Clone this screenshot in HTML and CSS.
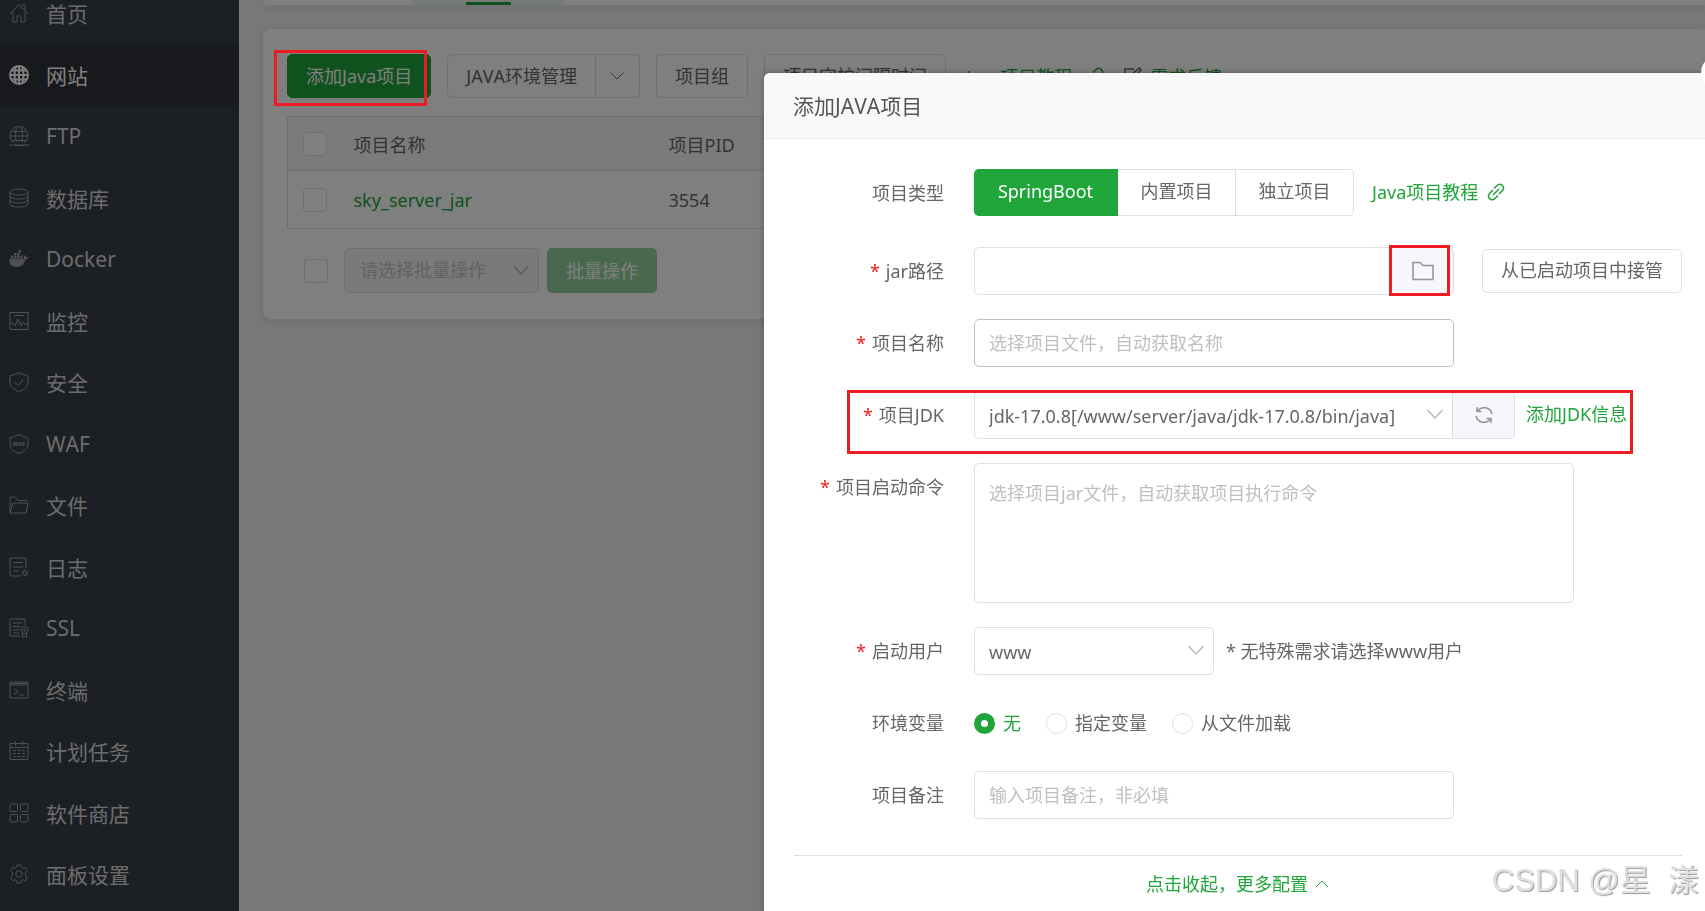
FILE: index.html
```html
<!DOCTYPE html>
<html lang="zh-CN">
<head>
  <meta charset="UTF-8">
  <meta name="viewport" content="width=device-width, initial-scale=1.0">
  <title>添加JAVA项目</title>
  <link rel="stylesheet" href="styles.css">
</head>
<body>
  <div class="layout">
    <nav class="sidebar">
      <a href="#" class="menu-item">
        <svg class="icon" viewBox="0 0 20 20"><path d="M1 11 10 1.500l9 9.500M4 9v10h4v-6h4v6h4V9M13 2h3v5"/></svg>首页</a>
      <a href="#" class="menu-item active">
        <svg class="icon" viewBox="0 0 20 20"><circle cx="10" cy="10" r="9"/><path d="M1 10h18M2.500 5.500h15M2.500 14.500h15M10 1v18M7 1.500C5 6 5 14 7 18.500M13 1.500c2 4.500 2 12.500 0 17"/></svg>网站</a>
      <a href="#" class="menu-item">
        <svg class="icon" viewBox="0 0 20 20"><path d="M5 17A9 9 0 1 1 15 17M1 10h18M3 5.500h14M3 14.500h14M7.500 1.500C6 6 6 12 7.500 16M12.500 1.500C14 6 14 12 12.500 16M0 19h20M6 19.500h8"/></svg>FTP</a>
      <a href="#" class="menu-item">
        <svg class="icon" viewBox="0 0 20 20"><ellipse cx="10" cy="4" rx="9" ry="3"/><path d="M1 4v12c0 4 18 4 18 0V4M1 8c0 4 18 4 18 0M1 12c0 4 18 4 18 0"/></svg>数据库</a>
      <a href="#" class="menu-item">
        <svg class="icon solid" viewBox="0 0 20 20"><path d="M.5 9.500h14.200c.6-.6.500-2.300-.2-3.500 1.500.3 2.200 1 2.500 2 1.200-.1 2 0 2.600.6-.6 1.200-1.800 1.600-3 1.600C15 15.500 12 18 7.500 18 2.500 18 0 15 .5 9.500zM2 6.500h2.400V9H2zM5 6.500h2.400V9H5zM8 6.500h2.400V9H8zM11 6.500h2.400V9H11zM5 4h2.400v2H5zM8 4h2.400v2H8zM9.500 1h2.400v2.500H9.500z"/></svg>Docker</a>
      <a href="#" class="menu-item">
        <svg class="icon" viewBox="0 0 20 20"><path d="M1 1.500h18v17H1zM5 4.500h10M1 13l3-1 2 3 3-7 3 7 2-4 2 2h3"/></svg>监控</a>
      <a href="#" class="menu-item">
        <svg class="icon" viewBox="0 0 20 20"><path d="M10 .800 1 4v6c0 4.500 4 8 9 9.500 5-1.500 9-5 9-9.500V4zM5.500 10l3.500 3.500L14.500 7"/></svg>安全</a>
      <a href="#" class="menu-item">
        <svg class="icon" viewBox="0 0 20 20"><path d="M10 .800 1 4v6c0 4.500 4 8 9 9.500 5-1.500 9-5 9-9.500V4z"/><text class="icon-text" x="10" y="12" text-anchor="middle">WAF</text></svg>WAF</a>
      <a href="#" class="menu-item">
        <svg class="icon" viewBox="0 0 20 20"><path d="M1 18V2h5l3 3.500h9M1 18h16l2-10H4L1 18"/></svg>文件</a>
      <a href="#" class="menu-item">
        <svg class="icon" viewBox="0 0 20 20"><path d="M12 19H1V1h16v10M4 5.500h10M4 10h10M4 14h6"/><circle cx="16" cy="16" r="2"/><path d="M16 12.500v1.500M16 18v1.500M12.500 16H14M18 16h1.500M13.500 13.500l1 1M17.500 17.500l1 1M18.500 13.500l-1 1M14.500 17.500l-1 1"/></svg>日志</a>
      <a href="#" class="menu-item">
        <svg class="icon" viewBox="0 0 20 20"><path d="M11 18H1V1h15v6M4 5h9M4 8.500h7M4 12h6M4 15h6"/><circle cx="15.500" cy="12" r="3.500"/><circle cx="15.500" cy="12" r="1"/><path d="M13.500 15v4.500l2-1.500 2 1.500V15"/></svg>SSL</a>
      <a href="#" class="menu-item">
        <svg class="icon" viewBox="0 0 20 20"><path d="M1 2h18v16H1zM1 3.500h18M1 5h18M5 8.500l4 3-4 3M10 15h5"/></svg>终端</a>
      <a href="#" class="menu-item">
        <svg class="icon" viewBox="0 0 20 20"><path d="M1 2.500h18v16H1zM1 6.500h18M6.500 0v4.500M13.500 0v4.500M4 9.500h3M8.500 9.500h3M13 9.500h3M4 12.500h3M8.500 12.500h3M13 12.500h3M4 15.500h3M8.500 15.500h3M13 15.500h3"/></svg>计划任务</a>
      <a href="#" class="menu-item">
        <svg class="icon" viewBox="0 0 20 20"><rect x="1" y="1" width="7.500" height="7.500" rx="1"/><rect x="11.500" y="1" width="7.500" height="7.500" rx="1"/><rect x="1" y="11.500" width="7.500" height="7.500" rx="1"/><rect x="11.500" y="11.500" width="7.500" height="7.500" rx="1"/></svg>软件商店</a>
      <a href="#" class="menu-item">
        <svg class="icon" viewBox="0 0 20 20"><path d="M8 1h4l.5 2.500 1.500.8 2.300-1 2 3.200-1.800 1.800v3.400l1.800 1.800-2 3.200-2.300-1-1.500.8L12 19H8l-.5-2.500-1.500-.8-2.300 1-2-3.200 1.800-1.800V8.300L1.700 6.500l2-3.200 2.300 1 1.500-.8z"/><circle cx="10" cy="10" r="3.300"/></svg>面板设置</a>
    </nav>

    <main class="content">
      <div class="tabs-card">
        <div class="tab"></div>
      </div>

      <div class="card">
        <div class="toolbar">
          <button type="button" class="btn btn-primary">添加Java项目</button>
          <div class="btn-group">
            <button type="button" class="btn">JAVA环境管理</button>
            <button type="button" class="btn btn-arrow" aria-label="展开">
              <svg class="chevron" viewBox="0 0 16 16"><path d="M1.500 4.500 8 11l6.500-6.500"/></svg>
            </button>
          </div>
          <button type="button" class="btn">项目组</button>
          <button type="button" class="btn">项目守护间隔时间</button>
          <a href="#" class="link tool-link">Java项目教程
            <svg class="tool-icon" viewBox="0 0 18 18"><path d="M7 5.500 10 2.500a3.500 3.500 0 0 1 5.500 0 3.500 3.500 0 0 1 0 5L12 11M11 12.500l-3 3a3.500 3.500 0 0 1-5.500 0 3.500 3.500 0 0 1 0-5L6 7M6 12l6-6"/></svg>
          </a>
          <a href="#" class="link feedback">
            <svg class="tool-icon grey" viewBox="0 0 18 18"><path d="M10 2H1v15h14V9M6 12l1-4 8.500-7L17 3l-7.500 8z"/></svg>需求反馈</a>
        </div>

        <table class="project-table">
          <thead>
            <tr>
              <th class="col-check"><input type="checkbox" class="check" aria-label="全选"></th>
              <th class="col-name">项目名称</th>
              <th>项目PID</th>
            </tr>
          </thead>
          <tbody>
            <tr>
              <td class="col-check"><input type="checkbox" class="check" aria-label="sky_server_jar"></td>
              <td class="col-name"><a href="#" class="link">sky_server_jar</a></td>
              <td>3554</td>
            </tr>
          </tbody>
        </table>

        <div class="batch">
          <input type="checkbox" class="check" aria-label="批量选择">
          <div class="select-wrap batch-select">
            <select class="control" aria-label="批量操作" disabled>
              <option>请选择批量操作</option>
            </select>
            <svg class="chevron" viewBox="0 0 16 16"><path d="M.5 4 8 12l7.500-8"/></svg>
          </div>
          <button type="button" class="btn btn-primary btn-disabled" disabled>批量操作</button>
        </div>
      </div>
    </main>
  </div>

  <div class="mask"></div>

  <section class="dialog" role="dialog" aria-labelledby="dialogTitle">
    <button type="button" class="close" aria-label="关闭"></button>
    <header class="dialog-header">
      <h2 id="dialogTitle">添加JAVA项目</h2>
    </header>

    <form class="dialog-body">
      <div class="form-row row-type">
        <span class="label">项目类型</span>
        <div class="segmented">
          <button type="button" class="seg selected">SpringBoot</button>
          <button type="button" class="seg">内置项目</button>
          <button type="button" class="seg">独立项目</button>
        </div>
        <a href="#" class="link type-link">Java项目教程
          <svg class="tool-icon" viewBox="0 0 18 18"><path d="M7 5.500 10 2.500a3.500 3.500 0 0 1 5.500 0 3.500 3.500 0 0 1 0 5L12 11M11 12.500l-3 3a3.500 3.500 0 0 1-5.500 0 3.500 3.500 0 0 1 0-5L6 7M6 12l6-6"/></svg>
        </a>
      </div>

      <div class="form-row">
        <label class="label required" for="jarPath">jar路径</label>
        <div class="input-group">
          <input type="text" class="control" id="jarPath">
          <button type="button" class="append" aria-label="选择文件">
            <svg class="folder" viewBox="0 0 22 20"><path d="M1 1.500h7l3 3h10v14H1z"/></svg>
          </button>
        </div>
        <button type="button" class="btn takeover">从已启动项目中接管</button>
      </div>

      <div class="form-row">
        <label class="label required" for="projectName">项目名称</label>
        <input type="text" class="control width-lg hovered" id="projectName" placeholder="选择项目文件，自动获取名称">
      </div>

      <div class="form-row">
        <label class="label required" for="jdk">项目JDK</label>
        <div class="input-group jdk-group">
          <div class="select-wrap width-lg">
            <select class="control" id="jdk">
              <option>jdk-17.0.8[/www/server/java/jdk-17.0.8/bin/java]</option>
            </select>
            <svg class="chevron" viewBox="0 0 16 16"><path d="M.5 4 8 12l7.500-8"/></svg>
          </div>
          <button type="button" class="append" aria-label="刷新">
            <svg class="refresh" viewBox="0 0 18 18"><path d="M2 1v4.500h4.500M2.500 5.300A8 8 0 0 1 17 8M16 17v-4.500h-4.500M15.500 12.700A8 8 0 0 1 1 10"/></svg>
          </button>
        </div>
        <a href="#" class="link jdk-link">添加JDK信息</a>
      </div>

      <div class="form-row">
        <label class="label required" for="command">项目启动命令</label>
        <textarea class="control command" id="command" placeholder="选择项目jar文件，自动获取项目执行命令"></textarea>
      </div>

      <div class="form-row">
        <label class="label required" for="user">启动用户</label>
        <div class="select-wrap width-sm">
          <select class="control" id="user">
            <option>www</option>
          </select>
          <svg class="chevron" viewBox="0 0 16 16"><path d="M.5 4 8 12l7.500-8"/></svg>
        </div>
        <span class="hint">* 无特殊需求请选择www用户</span>
      </div>

      <div class="form-row">
        <span class="label">环境变量</span>
        <div class="radios">
          <label class="radio"><input type="radio" name="env" checked><span>无</span></label>
          <label class="radio"><input type="radio" name="env"><span>指定变量</span></label>
          <label class="radio"><input type="radio" name="env"><span>从文件加载</span></label>
        </div>
      </div>

      <div class="form-row">
        <label class="label" for="remark">项目备注</label>
        <input type="text" class="control width-lg" id="remark" placeholder="输入项目备注，非必填">
      </div>

      <div class="more">
        <a href="#" class="link">点击收起，更多配置
          <svg class="chevron" viewBox="0 0 16 16"><path d="M2 11l6-6 6 6"/></svg>
        </a>
      </div>
    </form>

    <div class="mark mark-folder"></div>
    <div class="mark mark-jdk"></div>
  </section>

  <div class="mark mark-add"></div>
  <div class="watermark">CSDN @星&nbsp; 漾</div>
</body>
</html>
```
FILE: styles.css
```css
* {
  box-sizing: border-box;
}
body {
  margin: 0;
  height: 100vh;
  overflow: hidden;
  font-family: "Noto Sans", "Noto Sans CJK SC", sans-serif;
  font-size: 18px;
  font-kerning: none;
  color: #666;
  background-color: #f0f0f0;
}
button,
input,
select,
textarea {
  font: inherit;
  font-kerning: none;
  color: inherit;
}
a {
  text-decoration: none;
}
svg {
  fill: none;
  stroke: currentColor;
  flex: none;
}
.link {
  color: #20a53a;
}
.layout {
  display: flex;
  height: 100vh;
}

/* sidebar, scrolled down a little */
.sidebar {
  flex: none;
  width: 239px;
  margin-top: -17px;
  padding-bottom: 7px;
  display: flex;
  flex-direction: column;
  justify-content: space-between;
  background-color: #393f47;
}
.menu-item {
  display: flex;
  align-items: center;
  gap: 17px;
  height: 60px;
  padding-left: 9px;
  font-size: 21px;
  color: #d8d8d8;
}
.menu-item.active {
  background-color: #303238;
  color: #fff;
}
.icon {
  width: 20px;
  height: 20px;
  color: #a0a0a0;
}
.active .icon {
  color: #fff;
  stroke-width: 2;
}
.icon.solid {
  fill: currentColor;
  stroke: none;
}
.icon-text {
  font-size: 6px;
  font-weight: bold;
  fill: currentColor;
  stroke: none;
}

/* project list */
.content {
  flex: 1;
  min-width: 0;
  padding-left: 24px;
}
.tabs-card {
  height: 5px;
  margin-bottom: 24px;
  padding-left: 150px;
  border-radius: 0 0 0 8px;
  background-color: #fff;
  box-shadow: 0 2px 8px rgba(0, 0, 0, 0.1);
}
.tab {
  display: flex;
  justify-content: center;
  width: 150px;
  height: 5px;
  background-color: #e9f6eb;
}
.tab::after {
  content: "";
  width: 45px;
  height: 3px;
  margin-top: 2px;
  background-color: #20a53a;
}
.card {
  padding: 25px 0 26px 24px;
  border-radius: 8px 0 0 8px;
  background-color: #fff;
  box-shadow: 0 2px 8px rgba(0, 0, 0, 0.1);
}
.toolbar {
  display: flex;
  align-items: center;
  gap: 16px;
  white-space: nowrap;
}
.btn {
  height: 44px;
  padding: 0 18px 2px;
  border: 1px solid #dcdfe6;
  border-radius: 5px;
  background-color: #fff;
  white-space: nowrap;
}
.btn-primary {
  border-color: #20a53a;
  background-color: #20a53a;
  color: #fff;
}
.btn-disabled {
  border-color: #90d29d;
  background-color: #90d29d;
}
.btn-group {
  display: flex;
}
.btn-group .btn:first-child {
  border-radius: 5px 0 0 5px;
}
.btn-group .btn-arrow {
  display: flex;
  align-items: center;
  width: 44px;
  padding: 0 13px;
  border-left: none;
  border-radius: 0 5px 5px 0;
}
.chevron {
  width: 16px;
  height: 16px;
}
.tool-link {
  display: flex;
  align-items: center;
  gap: 14px;
  padding-left: 4px;
}
.feedback {
  display: flex;
  align-items: center;
  gap: 8px;
  padding-left: 4px;
}
.tool-icon {
  width: 18px;
  height: 18px;
  stroke-width: 1.500;
}
.tool-icon.grey {
  color: #666;
}
.project-table {
  width: 100%;
  margin: 18px 0 19px;
  border: 1px solid #dcdfe6;
  border-collapse: collapse;
}
.project-table th,
.project-table td {
  height: 58px;
  padding: 0 15px;
  border-bottom: 1px solid #dcdfe6;
  font-weight: normal;
  text-align: left;
}
.project-table th {
  height: 54px;
  background-color: #f6f6f6;
}
.project-table .col-check {
  width: 51px;
  padding-right: 0;
}
.project-table .col-name {
  width: 315px;
}
.check {
  appearance: none;
  display: block;
  width: 24px;
  height: 24px;
  margin: 0;
  border: 1px solid #dcdfe6;
  border-radius: 3px;
  background-color: #fff;
}
.batch {
  display: flex;
  align-items: center;
  gap: 8px;
  padding-left: 17px;
}
.batch .btn {
  height: 45px;
}
.batch-select {
  width: 195px;
  margin-left: 8px;
}
.batch-select .control {
  height: 45px;
  padding-left: 15px;
  background-color: #f5f5f5;
  color: #c0c4cc;
  opacity: 1;
}

/* form controls */
.control {
  display: block;
  width: 100%;
  height: 48px;
  padding: 0 14px;
  border: 1px solid #dcdfe6;
  border-radius: 5px;
  background-color: #fff;
  outline: none;
}
.control::placeholder {
  color: #bfbfbf;
}
.control.hovered {
  border-color: #c0c0c0;
}
select.control {
  appearance: none;
  padding-bottom: 2px;
}
.select-wrap {
  position: relative;
}
.select-wrap .chevron {
  position: absolute;
  top: 50%;
  right: 10px;
  margin-top: -9px;
  color: #b4b8c0;
  stroke-width: 1.500;
  pointer-events: none;
}
.width-lg {
  width: 480px;
}
.width-sm {
  width: 240px;
}

.mask {
  position: fixed;
  inset: 0;
  background-color: rgba(0, 0, 0, 0.5);
}

/* dialog, runs slightly past the right side of the window */
.dialog {
  position: fixed;
  top: 73px;
  right: -6px;
  bottom: 0;
  left: 764px;
  border-radius: 6px 6px 0 0;
  background-color: #fff;
  box-shadow: 0 0 6px rgba(0, 0, 0, 0.3);
}
.dialog-header {
  height: 66px;
  padding-left: 29px;
  border-bottom: 1px solid #eee;
  border-radius: 6px 6px 0 0;
  background-color: #f8f8f8;
}
.dialog-header h2 {
  margin: 0;
  font-size: 21px;
  font-weight: normal;
  line-height: 66px;
  color: #555;
}
.close {
  position: absolute;
  top: -18px;
  right: -26px;
  width: 36px;
  height: 36px;
  padding: 0;
  border: none;
  border-radius: 50%;
  background-color: #fff;
}
.dialog-body {
  padding: 30px 29px 0 30px;
}
.form-row {
  display: flex;
  min-height: 48px;
  margin-bottom: 24px;
  line-height: 48px;
  white-space: nowrap;
}
.row-type {
  margin-bottom: 30px;
}
.label {
  flex: none;
  width: 150px;
  margin-right: 30px;
  text-align: right;
}
.required::before {
  content: "*";
  margin-right: 6px;
  color: #f02020;
}
.segmented {
  display: flex;
  height: 47px;
}
.seg {
  width: 118px;
  padding: 0 0 3px;
  border: 1px solid #dcdfe6;
  border-left: none;
  background-color: #fff;
  line-height: 42px;
}
.seg.selected {
  width: 144px;
  border-color: #20a53a;
  border-radius: 5px 0 0 5px;
  background-color: #20a53a;
  color: #fff;
}
.seg:last-child {
  border-radius: 0 5px 5px 0;
}
.type-link {
  display: flex;
  align-items: center;
  gap: 9px;
  height: 46px;
  margin-left: 18px;
}
.input-group {
  display: flex;
  width: 480px;
}
.input-group .control {
  border-radius: 5px 0 0 5px;
}
.jdk-group {
  width: 541px;
}
.append {
  flex: none;
  display: flex;
  align-items: center;
  justify-content: center;
  width: 62px;
  height: 48px;
  padding: 0;
  border: 1px solid #dcdfe6;
  border-left: none;
  border-radius: 0 5px 5px 0;
  background-color: #f5f7fa;
  color: #909399;
}
.folder {
  width: 22px;
  height: 20px;
  stroke-width: 1.500;
}
.refresh {
  width: 18px;
  height: 18px;
  stroke-width: 1.500;
}
.takeover {
  margin: 2px 0 0 28px;
  line-height: 40px;
}
.jdk-link {
  margin-left: 11px;
  line-height: 46px;
}
.command {
  width: 600px;
  height: 140px;
  padding: 14px;
  line-height: 30px;
  resize: none;
}
.hint {
  margin-left: 12px;
}
.radios {
  display: flex;
  gap: 25px;
}
.radio {
  display: flex;
  align-items: center;
  gap: 8px;
}
.radio input {
  appearance: none;
  width: 21px;
  height: 21px;
  margin: 0;
  border: 1px solid #dcdfe6;
  border-radius: 50%;
  background-color: #fff;
}
.radio input:checked {
  border: 7px solid #20a53a;
}
.radio input:checked + span {
  color: #20a53a;
}
.more {
  margin-top: 36px;
  border-top: 1px solid #dcdfe6;
  line-height: 56px;
  text-align: center;
}
.more .link {
  display: flex;
  align-items: center;
  justify-content: center;
  gap: 6px;
}

/* red highlight frames */
.mark {
  position: absolute;
  border: 3px solid #ed1c24;
  pointer-events: none;
}
.mark-add {
  top: 50px;
  left: 274px;
  width: 153px;
  height: 56px;
}
.mark-folder {
  top: 172px;
  left: 625px;
  width: 61px;
  height: 51px;
}
.mark-jdk {
  top: 317px;
  left: 83px;
  width: 786px;
  height: 64px;
}
.watermark {
  position: fixed;
  right: 6px;
  bottom: 8px;
  font-family: "Liberation Sans", "Noto Sans CJK SC", sans-serif;
  font-size: 31px;
  line-height: 44px;
  white-space: nowrap;
  color: #e0e0e0;
  text-shadow: 1px 1px 1px #999;
}
```
